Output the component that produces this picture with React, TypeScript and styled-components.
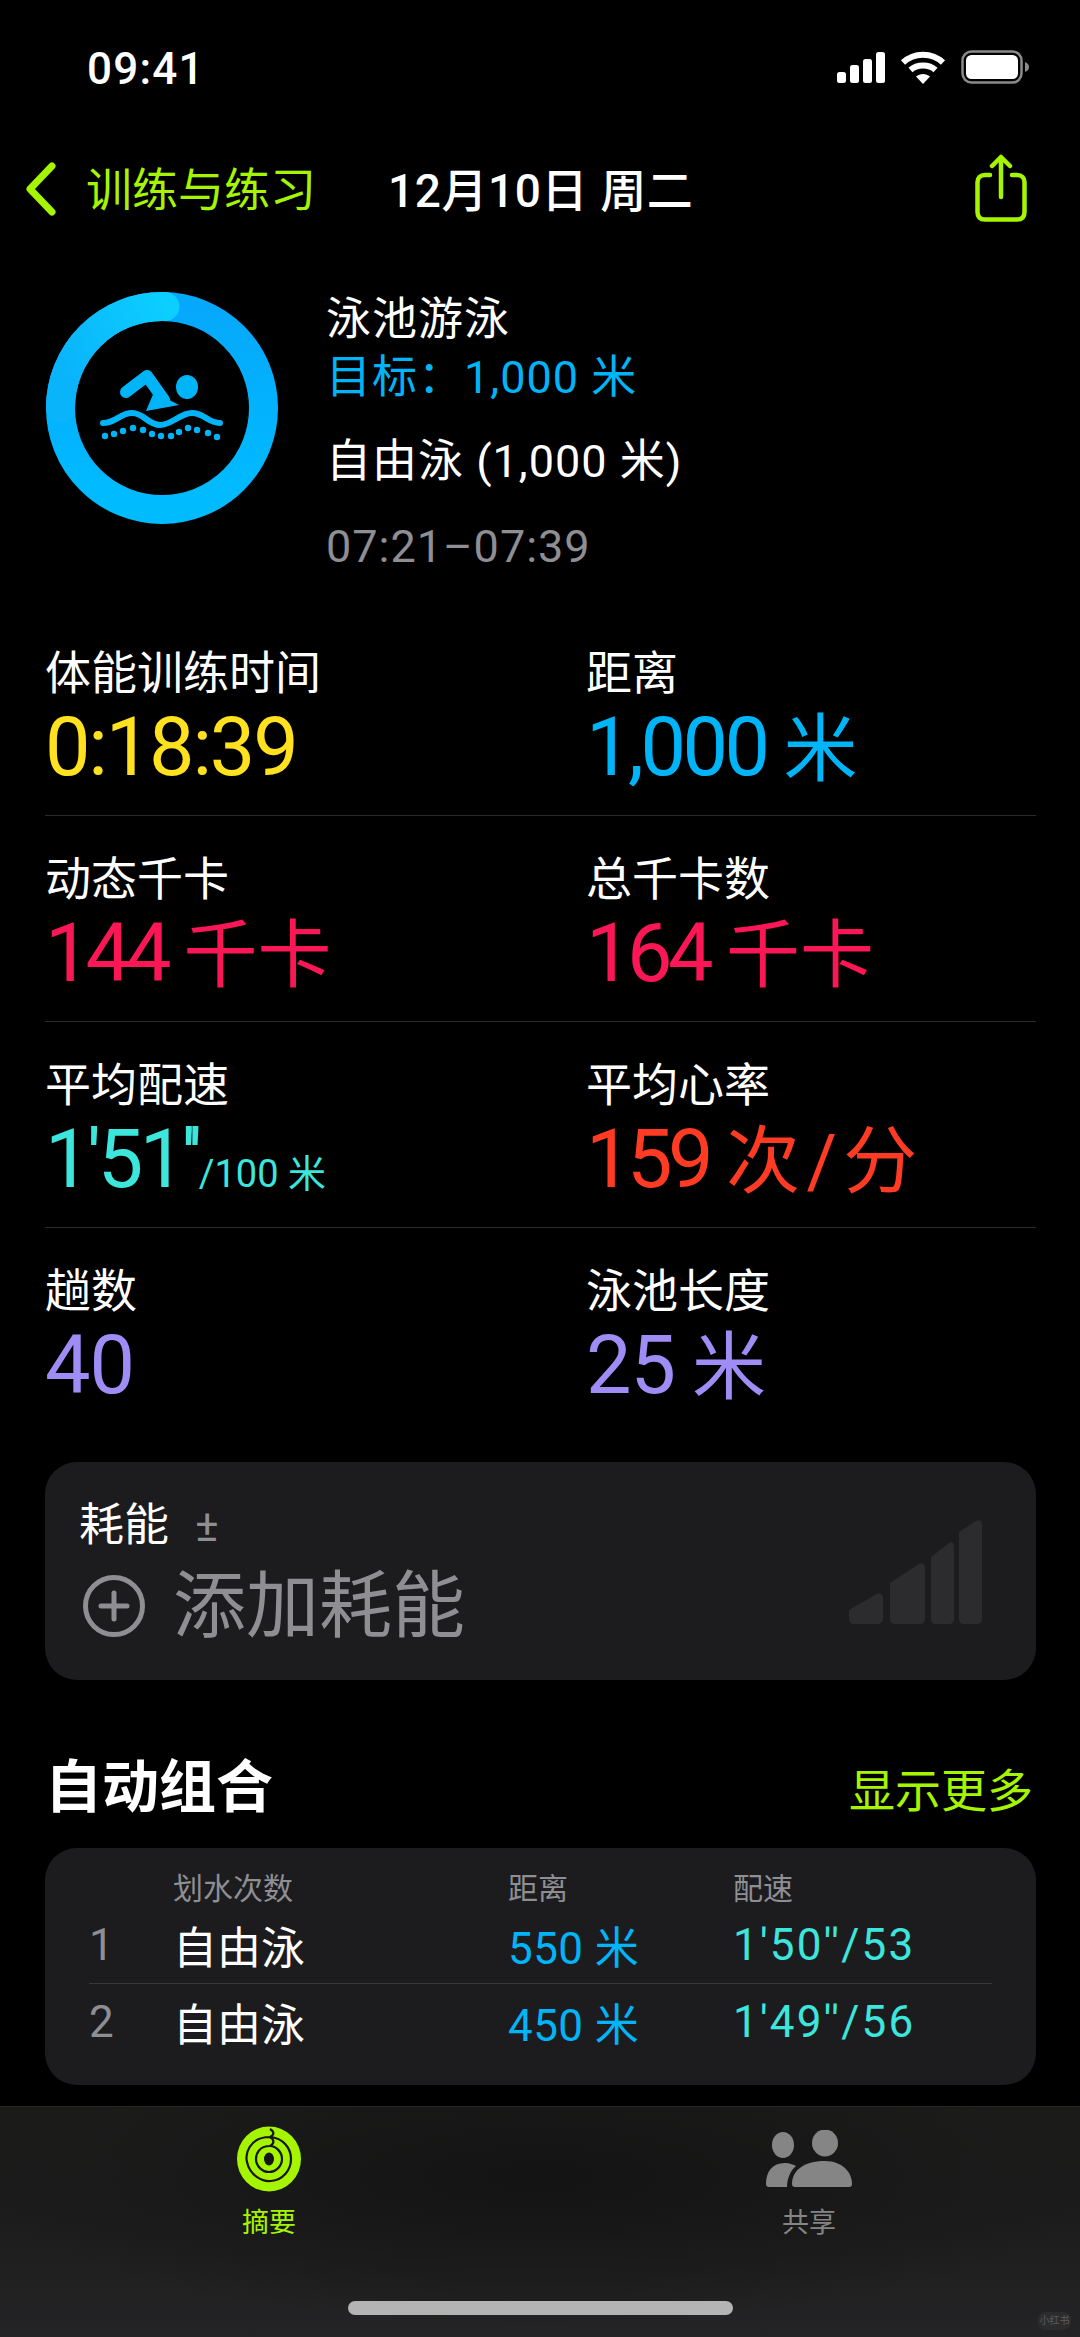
import React from 'react';
import styled, { createGlobalStyle } from 'styled-components';

const LIME = '#a6f500';
const BLUE = '#00b4f8';
const CJK = `Roboto, "Noto Sans CJK SC", sans-serif`;

const GlobalStyle = createGlobalStyle`
  html, body {
    margin: 0;
    padding: 0;
    background: #000;
  }
  body {
    font-family: ${CJK};
    color: #fff;
  }
`;

const Screen = styled.div`
  width: 1080px;
  height: 2337px;
  background: #000;
  display: flex;
  flex-direction: column;
  overflow: hidden;
  position: relative;
`;

const StatusBar = styled.div`
  height: 140px;
  flex: none;
  display: flex;
  align-items: flex-start;
  justify-content: space-between;
  padding: 47px 50px 0 87px;
  box-sizing: border-box;
`;

const Clock = styled.span`
  font-size: 44px;
  line-height: 44px;
  font-weight: 500;
  letter-spacing: 1.2px;
`;

const StatusIcons = styled.div`
  display: flex;
  gap: 15px;
  align-items: center;
  padding-top: 3px;
`;

const NavBar = styled.div`
  height: 92px;
  flex: none;
  display: flex;
  align-items: center;
  padding: 0 53px 0 26px;
`;

const BackLabel = styled.span`
  color: ${LIME};
  font-size: 46px;
  margin-left: 30px;
  width: 302px;
`;

const NavDate = styled.span`
  font-size: 46px;
  font-weight: 500;
  flex: 1;
  letter-spacing: 0.6px;
  position: relative;
  top: 1px;
`;

const Hero = styled.div`
  height: 378px;
  flex: none;
  display: flex;
  padding: 60px 0 0 46px;
  box-sizing: border-box;
`;

const HeroText = styled.div`
  margin-left: 48px;
  display: flex;
  flex-direction: column;
`;

const HeroLine = styled.div<{ $color?: string; $top?: number }>`
  font-size: 45px;
  line-height: 56px;
  letter-spacing: 1px;
  color: ${({ $color }) => $color || '#fff'};
  margin-top: ${({ $top }) => $top || 0}px;
`;

const StatGrid = styled.div`
  margin: 0 44px 0 45px;
`;

const StatRow = styled.div<{ $last?: boolean }>`
  height: 206px;
  box-sizing: border-box;
  display: grid;
  grid-template-columns: 541px 1fr;
  padding-top: 33px;
  border-bottom: ${({ $last }) => ($last ? 'none' : '1.5px solid #2a2a2c')};
`;

const StatLabel = styled.div`
  font-size: 46px;
  line-height: 60px;
`;

const StatValue = styled.div<{ $color: string; $track: number }>`
  font-size: 81px;
  line-height: 90px;
  letter-spacing: ${({ $track }) => $track}px;
  color: ${({ $color }) => $color};
  white-space: nowrap;
`;

const StatUnit = styled.span`
  font-size: 74px;
  letter-spacing: 0;
  word-spacing: -12px;
  margin-left: 17px;
`;

const SmallUnit = styled.span`
  font-size: 38px;
  letter-spacing: 0;
`;

const Card = styled.div`
  margin: 0 44px 0 45px;
  background: #1c1c1e;
  border-radius: 32px;
`;

const EnergyCard = styled(Card)`
  height: 218px;
  margin-top: 28px;
  box-sizing: border-box;
  padding: 36px 53px 0 34px;
  display: flex;
  justify-content: space-between;
`;

const EnergyTitle = styled.div`
  font-size: 45px;
  line-height: 56px;
  display: flex;
  align-items: center;
  gap: 26px;
`;

const PlusMinus = styled.span`
  font-size: 44px;
  color: #8e8e93;
`;

const AddRow = styled.div`
  display: flex;
  align-items: center;
  gap: 28px;
  margin-top: 10px;
  margin-left: 4px;
  color: #8e8e93;
  font-size: 73px;
  line-height: 84px;
`;

const SectionHead = styled.div`
  height: 168px;
  flex: none;
  box-sizing: border-box;
  display: flex;
  justify-content: space-between;
  align-items: baseline;
  padding: 68px 47px 0 45px;
`;

const SectionTitle = styled.span`
  font-size: 57px;
  line-height: 80px;
  font-weight: 700;
`;

const ShowMore = styled.span`
  font-size: 46px;
  color: ${LIME};
`;

const LapCard = styled(Card)`
  height: 237px;
  flex: none;
  box-sizing: border-box;
  padding: 16px 44px 0;
`;

const LapGrid = styled.div`
  display: grid;
  grid-template-columns: 84px 335px 225px 1fr;
  align-items: center;
`;

const LapHeader = styled(LapGrid)`
  height: 43px;
  color: #8e8e93;
  font-size: 30px;
`;

const LapRow = styled(LapGrid)<{ $rule?: boolean }>`
  height: 76px;
  font-size: 44px;
  border-bottom: ${({ $rule }) => ($rule ? '1.5px solid #38383a' : 'none')};
`;

const LapCell = styled.span<{ $color?: string; $spread?: number }>`
  color: ${({ $color }) => $color || '#fff'};
  letter-spacing: ${({ $spread }) => $spread || 0}px;
`;

const TabBar = styled.div`
  position: absolute;
  left: 0;
  right: 0;
  bottom: 0;
  height: 231px;
  box-sizing: border-box;
  border-top: 1px solid #262628;
  background:
    radial-gradient(ellipse 560px 150px at 50% 30%, #141414 0%, rgba(20, 20, 20, 0) 100%),
    linear-gradient(180deg, #1b1c1a 0%, #1c1c1c 45%, #242426 100%);
  display: grid;
  grid-template-columns: 538px 542px;
`;

const Tab = styled.div<{ $color: string }>`
  display: flex;
  flex-direction: column;
  align-items: center;
  color: ${({ $color }) => $color};
  font-size: 27px;
  line-height: 36px;
  padding-top: 19px;
`;

const TabIcon = styled.div`
  height: 66px;
  display: flex;
  align-items: center;
  margin-bottom: 13px;
`;

const HomeBar = styled.div`
  position: absolute;
  left: 348px;
  bottom: 22px;
  width: 385px;
  height: 14px;
  border-radius: 7px;
  background: #b4b4b4;
`;

const Watermark = styled.div`
  position: absolute;
  right: 9px;
  bottom: 7px;
  width: 33px;
  height: 18px;
  border-radius: 8px;
  background: #2c2c2e;
  color: #5c5c5c;
  font-size: 10px;
  line-height: 18px;
  text-align: center;
`;

const SignalIcon = () => (
  <svg width="48" height="31" viewBox="0 0 48 31" fill="#fff">
    <rect x="0" y="20" width="9" height="11" rx="2.5" />
    <rect x="13" y="13" width="9" height="18" rx="2.5" />
    <rect x="26" y="7" width="9" height="24" rx="2.5" />
    <rect x="39" y="0" width="9" height="31" rx="2.5" />
  </svg>
);

const WifiIcon = () => (
  <svg width="46" height="33" viewBox="0 0 46 33" fill="none" stroke="#fff" strokeWidth="6">
    <path d="M3 11.5 C14 1 32 1 43 11.5" />
    <path d="M10.5 19 C17 13 29 13 35.5 19" />
    <path d="M23 33 L16 25.5 C20 22 26 22 30 25.5 Z" fill="#fff" stroke="none" />
  </svg>
);

const BatteryIcon = () => (
  <svg width="69" height="34" viewBox="0 0 69 34">
    <rect x="1.5" y="1.5" width="59" height="31" rx="9" fill="none" stroke="#8a8a8a" strokeWidth="2.5" />
    <rect x="5" y="5" width="52" height="24" rx="5.5" fill="#fff" />
    <path d="M64 12 C67 13 68 15 68 17 C68 19 67 21 64 22 Z" fill="#8a8a8a" />
  </svg>
);

const BackChevron = () => (
  <svg width="30" height="54" viewBox="0 0 30 54" fill="none" stroke={LIME} strokeWidth="7" strokeLinecap="round" strokeLinejoin="round" style={{ marginTop: 6 }}>
    <path d="M26 4 L4 27 L26 50" />
  </svg>
);

const ShareIcon = () => (
  <svg width="52" height="68" viewBox="0 0 52 68" fill="none" stroke={LIME} strokeWidth="4.5" strokeLinecap="round" strokeLinejoin="round" style={{ marginTop: 4 }}>
    <path d="M15 21 H10 C5 21 2.5 24 2.5 28 V58 C2.5 63 5 65.5 10 65.5 H42 C47 65.5 49.5 63 49.5 58 V28 C49.5 24 47 21 42 21 H37" />
    <path d="M26 43 V3 M17 12 L26 3 L35 12" />
  </svg>
);

const DOTS: [number, number][] = [
  [59, 144], [68, 142], [77, 139], [87, 136], [97, 138], [106, 142], [115, 144],
  [125, 144], [133, 140], [142, 136], [151, 138], [162, 141], [171, 145],
];

const GoalRing = () => (
  <svg width="232" height="232" viewBox="0 0 232 232" style={{ flex: 'none' }}>
    <defs>
      <linearGradient id="ringBody" x1="0.5" y1="0" x2="0.5" y2="1">
        <stop offset="0" stopColor="#06a8fb" />
        <stop offset="1" stopColor="#00bcff" />
      </linearGradient>
      <linearGradient id="ringHead" x1="0" y1="0.5" x2="1" y2="0">
        <stop offset="0" stopColor="#0ab4fb" />
        <stop offset="1" stopColor="#0cceff" />
      </linearGradient>
    </defs>
    <circle cx="116" cy="116" r="101.5" fill="none" stroke="url(#ringBody)" strokeWidth="29" />
    <path d="M14.5 116 A101.5 101.5 0 0 1 116 14.5 L119 14.5" fill="none" stroke="url(#ringHead)" strokeWidth="29" strokeLinecap="round" />
    {/* swimmer */}
    <ellipse cx="141" cy="95" rx="11" ry="12" fill={BLUE} />
    <path d="M80 100 L101 84 L118 108" fill="none" stroke={BLUE} strokeWidth="12" strokeLinecap="round" strokeLinejoin="round" />
    <path d="M108 100 L133 113 L100 119 Z" fill={BLUE} />
    <path d="M57 131 C70 131 74 121 86 121 C98 121 102 133 114 133 C126 133 134 121 146 121 C158 121 162 131 174 131" fill="none" stroke={BLUE} strokeWidth="6" strokeLinecap="round" />
    {DOTS.map(([x, y]) => (
      <circle key={x} cx={x} cy={y} r="3.2" fill={BLUE} />
    ))}
  </svg>
);

const PlusCircle = () => (
  <svg width="62" height="62" viewBox="0 0 62 62" fill="none" stroke="#8e8e93" strokeLinecap="round">
    <circle cx="31" cy="31" r="28.5" strokeWidth="5" />
    <path d="M31 18 V44 M18 31 H44" strokeWidth="5" />
  </svg>
);

const EffortBars = () => (
  <svg width="134" height="104" viewBox="0 0 134 104" fill="#2c2c2e" style={{ marginTop: 22 }}>
    <path d="M0 90 L26 75 C30 72 34 74 34 78 V98 C34 102 32 104 28 104 H5 C2 104 0 102 0 98 Z" />
    <path d="M41 63 L70 44 C73 42 76 44 76 48 V98 C76 102 74 104 70 104 H46 C43 104 41 102 41 98 Z" />
    <path d="M82 37 L100 23 C103 21 105 23 105 27 V99 C105 102 103 104 100 104 H87 C84 104 82 102 82 99 Z" />
    <path d="M110 12 L127 1 C130 -1 133 1 133 5 V99 C133 102 131 104 128 104 H115 C112 104 110 102 110 99 Z" />
  </svg>
);

const ActivityRings = () => (
  <svg width="64" height="66" viewBox="0 0 64 66">
    <ellipse cx="32" cy="33" rx="32" ry="32.5" fill={LIME} />
    <path d="M33 3 C38 6 37 9 33 11 C11 11 8 30 10 36 C13 50 26 56 34 55 C46 54 54 44 54 33 C54 22 46 12 33 11" fill="none" stroke="#151515" strokeWidth="2.2" />
    <path d="M33 11 C38 14 37 18 33 20 C22 20 19 28 19 33 C19 40 25 46 32 46 C39 46 45 40 45 33 C45 26 39 20 33 20" fill="none" stroke="#151515" strokeWidth="2.2" />
    <ellipse cx="32" cy="33" rx="5" ry="6.5" fill="#151515" />
  </svg>
);

const FriendsIcon = () => (
  <svg width="86" height="58" viewBox="0 0 86 58" fill="#858585">
    <ellipse cx="17" cy="15" rx="11" ry="13" />
    <ellipse cx="59" cy="13" rx="13" ry="13.5" />
    <path d="M0 54 C0 42 6 33 19 33 C24 33 28 35 30 36 C24 41 21 49 21 57 H3 C1 57 0 56 0 54 Z" />
    <path d="M26 54 C26 41 37 31 59 31 C76 31 86 42 86 54 C86 56 85 57 83 57 H29 C27 57 26 56 26 54 Z" />
  </svg>
);

type Stat = { label: string; value: string; unit?: string; small?: string; color: string; track: number };

const STATS: Stat[][] = [
  [
    { label: '体能训练时间', value: '0:18:39', color: '#ffe11f', track: -2.2 },
    { label: '距离', value: '1,000', unit: '米', color: BLUE, track: -3.5 },
  ],
  [
    { label: '动态千卡', value: '144', unit: '千卡', color: '#fb1755', track: -5 },
    { label: '总千卡数', value: '164', unit: '千卡', color: '#fb1755', track: -4.5 },
  ],
  [
    { label: '平均配速', value: "1'51''", small: '/100 米', color: '#3ce6dc', track: -3.5 },
    { label: '平均心率', value: '159', unit: '次 / 分', color: '#ff3b24', track: -4.5 },
  ],
  [
    { label: '趟数', value: '40', color: '#a08cf5', track: -1 },
    { label: '泳池长度', value: '25', unit: '米', color: '#a08cf5', track: -1 },
  ],
];

const LAPS = [
  { n: '1', dist: '550 米', pace: "1'50''/53" },
  { n: '2', dist: '450 米', pace: "1'49''/56" },
];

export default function App() {
  return (
    <Screen>
      <GlobalStyle />
      <StatusBar>
        <Clock>09:41</Clock>
        <StatusIcons>
          <SignalIcon />
          <WifiIcon />
          <BatteryIcon />
        </StatusIcons>
      </StatusBar>

      <NavBar>
        <BackChevron />
        <BackLabel>训练与练习</BackLabel>
        <NavDate>12月10日 周二</NavDate>
        <ShareIcon />
      </NavBar>

      <Hero>
        <GoalRing />
        <HeroText>
          <HeroLine>泳池游泳</HeroLine>
          <HeroLine $color={BLUE} $top={2}>目标：1,000 米</HeroLine>
          <HeroLine $top={28}>自由泳 (1,000 米)</HeroLine>
          <HeroLine $color="#8e8e93" $top={29}>07:21–07:39</HeroLine>
        </HeroText>
      </Hero>

      <StatGrid>
        {STATS.map((row, i) => (
          <StatRow key={i} $last={i === STATS.length - 1}>
            {row.map((s) => (
              <div key={s.label}>
                <StatLabel>{s.label}</StatLabel>
                <StatValue $color={s.color} $track={s.track}>
                  {s.value}
                  {s.unit && <StatUnit>{s.unit}</StatUnit>}
                  {s.small && <SmallUnit>{s.small}</SmallUnit>}
                </StatValue>
              </div>
            ))}
          </StatRow>
        ))}
      </StatGrid>

      <EnergyCard>
        <div>
          <EnergyTitle>
            耗能 <PlusMinus>±</PlusMinus>
          </EnergyTitle>
          <AddRow>
            <PlusCircle />
            添加耗能
          </AddRow>
        </div>
        <EffortBars />
      </EnergyCard>

      <SectionHead>
        <SectionTitle>自动组合</SectionTitle>
        <ShowMore>显示更多</ShowMore>
      </SectionHead>

      <LapCard>
        <LapHeader>
          <span />
          <span>划水次数</span>
          <span>距离</span>
          <span>配速</span>
        </LapHeader>
        {LAPS.map((lap, i) => (
          <LapRow key={lap.n} $rule={i === 0}>
            <LapCell $color="#8e8e93">{lap.n}</LapCell>
            <LapCell>自由泳</LapCell>
            <LapCell $color={BLUE} $spread={0.4}>{lap.dist}</LapCell>
            <LapCell $color="#3ce6dc" $spread={2.2}>{lap.pace}</LapCell>
          </LapRow>
        ))}
      </LapCard>

      <TabBar>
        <Tab $color={LIME}>
          <TabIcon>
            <ActivityRings />
          </TabIcon>
          摘要
        </Tab>
        <Tab $color="#858585">
          <TabIcon>
            <FriendsIcon />
          </TabIcon>
          共享
        </Tab>
      </TabBar>
      <HomeBar />
      <Watermark>小红书</Watermark>
    </Screen>
  );
}
